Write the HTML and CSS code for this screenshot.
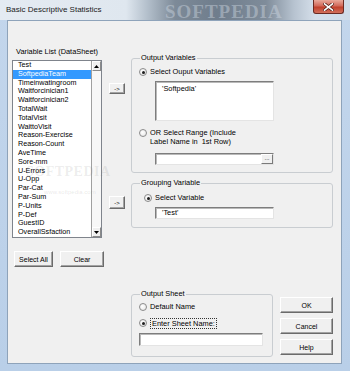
FILE: index.html
```html
<!DOCTYPE html>
<html lang="en">
<head>
  <meta charset="UTF-8" />
  <title>Basic Descriptive Statistics</title>
  <link rel="stylesheet" href="styles.css">
</head>
<body>
  <div class="window">
    <div class="titlebar">
      <span class="title">Basic Descriptive Statistics</span>
      <span class="title-mark">SOFTPEDIA</span>
      <span class="close-btn">
        <svg width="11" height="8" viewBox="0 0 11 8">
          <path d="M1.5 0.8 L9.5 7.2 M9.5 0.8 L1.5 7.2" stroke="#4a1a14" stroke-width="3" stroke-linecap="square"/>
          <path d="M1.5 0.8 L9.5 7.2 M9.5 0.8 L1.5 7.2" stroke="#fff" stroke-width="1.6" stroke-linecap="square"/>
        </svg>
      </span>
    </div>

    <div class="client">
      <div class="col-left">
        <div class="caption">Variable List (DataSheet)</div>
        <div class="listbox">
          <ul class="items">
            <li>Test</li>
            <li class="selected">SoftpediaTeam</li>
            <li>Timeinwatingroom</li>
            <li>Waitforcinician1</li>
            <li>Waitforcinician2</li>
            <li>TotalWait</li>
            <li>TotalVisit</li>
            <li>WaittoVisit</li>
            <li>Reason-Exercise</li>
            <li>Reason-Count</li>
            <li>AveTime</li>
            <li>Sore-mm</li>
            <li>U-Errors</li>
            <li>U-Opp</li>
            <li>Par-Cat</li>
            <li>Par-Sum</li>
            <li>P-Units</li>
            <li>P-Def</li>
            <li>GuestID</li>
            <li>OverallSsfaction</li>
          </ul>
          <div class="vscroll">
            <span class="sb-btn">
              <svg width="5" height="3" viewBox="0 0 5 3"><path d="M0 3 L2.5 0 L5 3 Z" fill="#000"/></svg>
            </span>
            <span class="sb-track"></span>
            <span class="sb-btn">
              <svg width="5" height="3" viewBox="0 0 5 3"><path d="M0 0 L5 0 L2.5 3 Z" fill="#000"/></svg>
            </span>
          </div>
        </div>
        <div class="list-actions">
          <button class="btn btn-select">Select All</button>
          <button class="btn btn-clear">Clear</button>
        </div>
      </div>

      <div class="col-mid">
        <button class="btn arrow arrow-out">-&gt;</button>
        <button class="btn arrow arrow-group">-&gt;</button>
      </div>

      <div class="col-right">
        <fieldset class="group group-output">
          <legend>Output Variables</legend>
          <div class="group-body">
            <div class="radio-row">
              <span class="radio checked"></span>
              <span>Select Ouput Variables</span>
            </div>
            <div class="textbox tall">'Softpedia'</div>
            <div class="radio-row two-line">
              <span class="radio"></span>
              <span>OR Select Range (Include<br>Label Name in&nbsp; 1st Row)</span>
            </div>
            <div class="textbox range">
              <span class="browse">...</span>
            </div>
          </div>
        </fieldset>

        <fieldset class="group group-grouping">
          <legend>Grouping Variable</legend>
          <div class="group-body">
            <div class="radio-row indent">
              <span class="radio checked"></span>
              <span>Select Variable</span>
            </div>
            <div class="textbox short">'Test'</div>
          </div>
        </fieldset>

        <div class="bottom-row">
          <fieldset class="group group-sheet">
            <legend>Output Sheet</legend>
            <div class="group-body">
              <div class="radio-row">
                <span class="radio"></span>
                <span>Default Name</span>
              </div>
              <div class="radio-row second">
                <span class="radio checked"></span>
                <span class="focus">Enter Sheet Name:</span>
              </div>
              <div class="textbox sheet-name"></div>
            </div>
          </fieldset>
          <div class="actions">
            <button class="btn action">OK</button>
            <button class="btn action">Cancel</button>
            <button class="btn action">Help</button>
          </div>
        </div>
      </div>

      <div class="watermark">SOFTPEDIA</div>
      <div class="watermark-url">www.softpedia.com</div>
    </div>
  </div>
</body>
</html>
```

FILE: styles.css
```css
* {
  box-sizing: border-box;
}
body {
  margin: 0;
  font-family: 'Liberation Sans', Arial, sans-serif;
  font-size: 7.4px;
  color: #000;
}
.window {
  width: 350px;
  height: 371px;
  overflow: hidden;
  background: linear-gradient(180deg, #c3d6ec 0%, #b9cfe8 100%);
}

/* title bar */
.titlebar {
  position: relative;
  height: 20px;
  display: flex;
  align-items: flex-start;
  background: linear-gradient(90deg, #e4ebf2 0%, #dfe7ef 36%, #b4c0cc 42%, #7d8a98 50%, #6f7d8c 62%, #7f8c9a 76%, #b7c3d0 84%, #d5dfea 90%, #cfdbe8 100%);
}
.title {
  padding: 5px 0 0 6px;
  font-size: 8px;
  line-height: 10px;
  color: #1b1b1b;
}
.title-mark {
  position: absolute;
  left: 165px;
  top: 1px;
  font-family: 'Liberation Serif', serif;
  font-weight: bold;
  font-size: 19px;
  letter-spacing: 1px;
  color: rgba(205, 214, 224, 0.45);
}
.close-btn {
  margin-left: auto;
  margin-right: 6px;
  width: 31px;
  height: 14px;
  display: flex;
  align-items: center;
  justify-content: center;
  border: 1px solid #6b2a22;
  border-top: none;
  border-radius: 0 0 3px 3px;
  background: linear-gradient(180deg, #e9a99b 0%, #d2695a 45%, #c1402c 55%, #d2705c 100%);
}

/* client area */
.client {
  position: relative;
  display: flex;
  align-items: flex-start;
  height: 344px;
  margin: 0 8px 0 7px;
  background: #f0f0f0;
  border: 1px solid #8ea3ba;
}

.col-left {
  width: 92px;
  margin-left: 4px;
  padding-top: 26px;
}
.caption {
  padding-left: 4px;
  line-height: 10px;
  white-space: nowrap;
}
.listbox {
  display: flex;
  width: 90px;
  height: 178px;
  margin-top: 3px;
  background: #fff;
  border: 1px solid #7f848c;
  overflow: hidden;
}
.items {
  flex: 1;
  margin: 0;
  padding: 0;
  list-style: none;
}
.items li {
  height: 8.8px;
  padding-left: 5px;
  font-size: 7.2px;
  line-height: 8.8px;
  white-space: nowrap;
}
.items li.selected {
  background: #3399ff;
  color: #fff;
}
.vscroll {
  display: flex;
  flex-direction: column;
  width: 10px;
  border-left: 1px solid #a0a0a0;
  background: #f7f7f7;
}
.sb-btn {
  display: flex;
  align-items: center;
  justify-content: center;
  height: 10px;
  background: #f0f0f0;
  border: 1px solid;
  border-color: #fff #8a8a8a #8a8a8a #fff;
}
.sb-track {
  flex: 1;
}
.list-actions {
  display: flex;
  gap: 7px;
  margin-top: 13px;
  padding-left: 2px;
}

/* buttons */
.btn {
  margin: 0;
  padding: 0;
  height: 16px;
  font-family: inherit;
  font-size: 7px;
  color: #000;
  background: #f0f0f0;
  border: 1px solid;
  border-color: #fff #6b6b6b #6b6b6b #fff;
  box-shadow: inset -1px -1px 0 #a3a3a3;
}
.btn-select {
  width: 39px;
}
.btn-clear {
  width: 44px;
}

.col-mid {
  display: flex;
  flex-direction: column;
  width: 16px;
  margin-left: 5px;
}
.arrow {
  width: 16px;
  height: 11px;
  font-size: 6px;
  line-height: 8px;
}
.arrow-out {
  margin-top: 62px;
}
.arrow-group {
  height: 13px;
  margin-top: 102px;
}

/* right column */
.col-right {
  width: 202px;
  margin-left: 6px;
  padding-top: 32px;
}
.group {
  margin: 0;
  padding: 0;
  min-width: 0;
  border: 1px solid #c9cdd1;
  border-radius: 3px;
}
.group legend {
  margin-left: 8px;
  padding: 0 1px;
  line-height: 10px;
}
.group-body {
  padding-left: 7px;
}
.group-output .group-body {
  padding-top: 4px;
  padding-bottom: 7px;
}
.group-grouping {
  margin-top: 5px;
}
.group-grouping .group-body {
  padding-top: 5px;
  padding-bottom: 8px;
}
.radio-row {
  display: flex;
  align-items: center;
  gap: 3px;
  height: 10px;
  line-height: 10px;
  white-space: nowrap;
}
.radio-row.two-line {
  align-items: flex-start;
  height: 18px;
  margin-top: 7px;
  line-height: 9px;
}
.radio-row.two-line .radio {
  margin-top: 1px;
}
.radio-row.indent {
  padding-left: 5px;
}
.radio {
  position: relative;
  flex: none;
  width: 8px;
  height: 8px;
  border: 1px solid #8b8b8b;
  border-radius: 50%;
  background: radial-gradient(circle at 40% 40%, #fff 0%, #e2e2e2 100%);
}
.radio.checked::after {
  content: '';
  position: absolute;
  left: 1.5px;
  top: 1.5px;
  width: 3px;
  height: 3px;
  border-radius: 50%;
  background: #1d1d1d;
}
.textbox {
  position: relative;
  margin-left: 16px;
  width: 119px;
  padding-left: 6px;
  background: #fff;
  border: 1px solid;
  border-color: #7d7d7d #e4e4e4 #e4e4e4 #7d7d7d;
  box-shadow: inset 1px 1px 0 #b9b9b9;
  white-space: nowrap;
}
.textbox.tall {
  height: 40px;
  margin-top: 4px;
  padding-top: 2px;
  line-height: 10px;
}
.textbox.range {
  height: 12px;
  margin-top: 7px;
  display: flex;
  justify-content: flex-end;
  padding-left: 0;
}
.browse {
  width: 12px;
  height: 10px;
  font-size: 6px;
  line-height: 7px;
  text-align: center;
  background: #f0f0f0;
  border: 1px solid;
  border-color: #fff #7a7a7a #7a7a7a #fff;
}
.textbox.short {
  height: 12px;
  margin-top: 4px;
  line-height: 10px;
}

.bottom-row {
  display: flex;
  align-items: flex-start;
  gap: 7px;
  margin-top: 61px;
}
.group-sheet {
  width: 142px;
}
.group-sheet .group-body {
  padding-top: 3px;
  padding-bottom: 10px;
}
.radio-row.second {
  margin-top: 6px;
}
.focus {
  padding: 0 1px;
  line-height: 9px;
  border: 1px dotted #333;
}
.textbox.sheet-name {
  width: 124px;
  height: 13px;
  margin-top: 5px;
  margin-left: 0;
}
.actions {
  display: flex;
  flex-direction: column;
  gap: 5px;
  margin-top: 8px;
}
.action {
  width: 53px;
}

.watermark {
  position: absolute;
  left: 18px;
  top: 143px;
  font-family: 'Liberation Serif', serif;
  font-weight: bold;
  font-size: 14px;
  letter-spacing: 0.5px;
  color: rgba(120, 120, 120, 0.14);
  pointer-events: none;
}
.watermark-url {
  position: absolute;
  left: 36px;
  top: 168px;
  font-size: 6px;
  color: rgba(120, 120, 120, 0.18);
  pointer-events: none;
}
```
